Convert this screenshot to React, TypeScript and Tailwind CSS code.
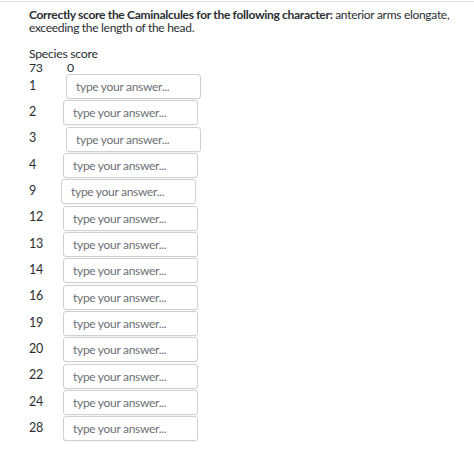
import React from 'react';

const rows: { label: string; offset: string }[] = [
  { label: '1', offset: 'ml-[5px]' },
  { label: '2', offset: 'ml-[2px]' },
  { label: '3', offset: 'ml-[5px]' },
  { label: '4', offset: 'ml-[2px]' },
  { label: '9', offset: 'ml-0' },
  { label: '12', offset: 'ml-[2px]' },
  { label: '13', offset: 'ml-[2px]' },
  { label: '14', offset: 'ml-[2px]' },
  { label: '16', offset: 'ml-[2px]' },
  { label: '19', offset: 'ml-[2px]' },
  { label: '20', offset: 'ml-[2px]' },
  { label: '22', offset: 'ml-[2px]' },
  { label: '24', offset: 'ml-[2px]' },
  { label: '28', offset: 'ml-[2px]' },
];

const App: React.FC = () => {
  return (
    <div className="w-[474px] h-[464px] bg-white font-['Lato',sans-serif] text-[#2b2e31] tracking-[-0.3px] overflow-hidden">
      <div className="h-[1px] mt-[1px] bg-[#e4e4e4]" />
      <div className="pl-[29px] pr-[16px] pt-[6px]">
        <p className="text-[12px] leading-[13px]">
          <strong className="font-bold">Correctly score the Caminalcules for the following character:</strong>{' '}
          anterior arms elongate, exceeding the length of the head.
        </p>

        <div className="mt-[13px] text-[12.3px] leading-[14px]">
          <div>Species score</div>
          <div className="flex">
            <span className="w-[38px]">73</span>
            <span>0</span>
          </div>
        </div>

        <div className="-mt-[1.5px]">
          {rows.map((row) => (
            <div key={row.label} className="flex items-center h-[26.34px]">
              <span className="w-[32px] text-[12.5px] leading-[14px] -mt-[2px]">{row.label}</span>
              <input
                type="text"
                placeholder="type your answer..."
                className={`${row.offset} w-[135px] h-[25px] rounded-[3px] border border-[#cdd1d4] bg-white px-[9px] text-[12px] tracking-[-0.3px] text-[#2b2e31] placeholder:text-[#6c7075] outline-none shadow-[0_1px_0_rgba(0,0,0,0.04)]`}
              />
            </div>
          ))}
        </div>
      </div>
    </div>
  );
};

export default App;
